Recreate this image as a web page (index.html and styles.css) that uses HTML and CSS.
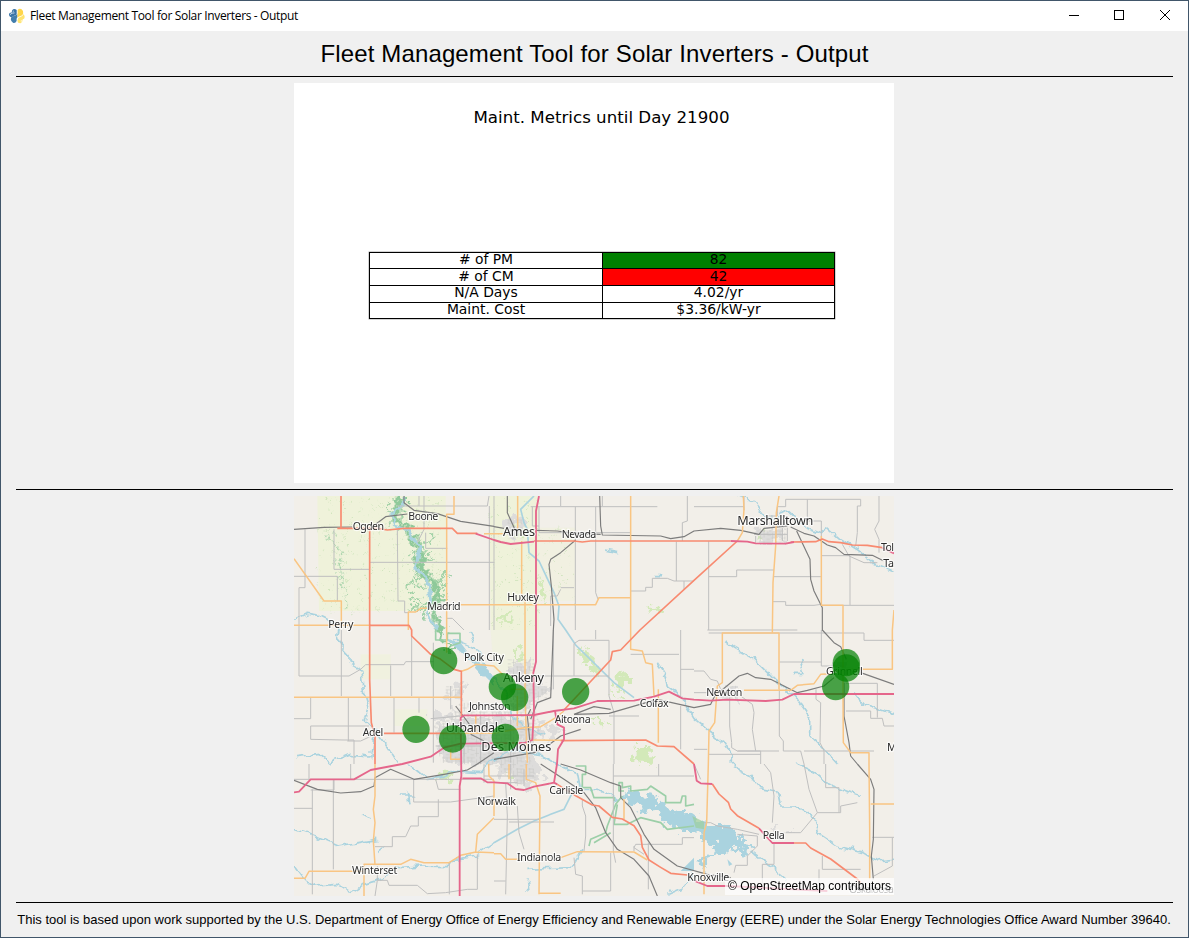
FILE: index.html
```html
<!DOCTYPE html>
<html lang="en">
<head>
<meta charset="utf-8">
<title>Fleet Management Tool for Solar Inverters - Output</title>
<link rel="stylesheet" href="styles.css">
</head>
<body>
<div class="window">
  <header class="titlebar">
    <svg class="app-icon" viewBox="0 0 16 16" width="16" height="16">
      <path d="M3 2.5Q5-.2 7.7 2V6Q7.3 7.7 5.2 7.8Q3.4 8 3 9.6Q0 9 0 6.3Q0 4.3 2.8 4.5Z" fill="#3974a6"/>
      <path d="M1.800 11.2Q2 8.400 5 8Q8 7.600 8.300 5.6Q9 9.200 7.6 10.7V13Q6.4 15.5 4 14.7Q2 13.6 1.800 11.2Z" fill="#427ead"/>
      <path d="M8.6 2.2Q10 .2 12.6 1.2Q14.6 2.4 14.2 5.4Q13.7 7.5 11.4 8Q9.2 8.4 8.8 10Q7.8 7.8 8.7 6.2Z" fill="#ffd64b"/>
      <path d="M14.4 6.3Q16.4 8 15.3 10.5Q14.4 11.3 13.6 11.4Q13.8 14.4 11.4 15.2Q8.6 15.3 8.5 12.7Q8.4 9.6 11 9Q14 8.6 14.4 6.3Z" fill="#ffe46f"/>
      <path d="M1 6.6Q3 4.6 5.5 4.9M3.8 3.2h1" stroke="#d9e7f2" fill="none" stroke-width=".9"/>
      <circle cx="12.3" cy="12.9" r=".6" fill="#fff"/>
    </svg>
    <span class="caption">Fleet Management Tool for Solar Inverters - Output</span>
    <svg class="controls" width="137" height="30" viewBox="0 0 137 30" shape-rendering="crispEdges">
      <path d="M18 14.5h10" stroke="#000" fill="none"/>
      <rect x="63.500" y="9.500" width="9" height="9" stroke="#000" fill="none"/>
      <path d="M109 9L119 19M119 9L109 19" stroke="#000" fill="none" shape-rendering="auto"/>
    </svg>
  </header>
  <main class="content">
    <h1 class="heading"><span>Fleet Management Tool for Solar Inverters - Output</span></h1>
    <div class="rule"></div>
    <section class="figure">
      <div class="figure-title">Maint. Metrics until Day 21900</div>
      <div class="metrics">
        <div class="cell raised"># of PM</div><div class="cell raised good">82</div>
        <div class="cell"># of CM</div><div class="cell bad">42</div>
        <div class="cell raised">N/A Days</div><div class="cell raised">4.02/yr</div>
        <div class="cell raised">Maint. Cost</div><div class="cell raised">$3.36/kW-yr</div>
      </div>
    </section>
    <div class="rule"></div>
    <section class="map">
      <svg class="map-canvas" width="600" height="400" viewBox="0 0 1800 1200">
        <defs>
          <filter id="rough" x="-10%" y="-10%" width="120%" height="120%">
            <feTurbulence type="fractalNoise" baseFrequency=".05" numOctaves="3" seed="4"/>
            <feDisplacementMap in="SourceGraphic" scale="60" xChannelSelector="R" yChannelSelector="G"/>
          </filter>
          <filter id="meander" x="-10%" y="-20%" width="120%" height="140%">
            <feTurbulence type="fractalNoise" baseFrequency=".035" numOctaves="2" seed="8"/>
            <feDisplacementMap in="SourceGraphic" scale="26" xChannelSelector="R" yChannelSelector="G"/>
          </filter>
          <filter id="blocks" x="-10%" y="-10%" width="120%" height="120%">
            <feTurbulence type="fractalNoise" baseFrequency=".03" numOctaves="3" seed="11"/>
            <feDisplacementMap in="SourceGraphic" scale="95" xChannelSelector="R" yChannelSelector="G"/>
          </filter>
          <pattern id="streets" width="37" height="34" patternUnits="userSpaceOnUse">
            <path d="M0 3H25M4 0V23M15 3V15H25M4 13H15M30 8V34M25 24H37M12 28H22" stroke="#cbcac8" stroke-width="2" fill="none"/>
          </pattern>
          <pattern id="woods" width="90" height="80" patternUnits="userSpaceOnUse">
            <path d="M8 12l5 4M40 5l-4 6M70 22l7-2M20 44l6 6M55 52l-5 4M81 66l-3 5M31 73l5-2M62 34l3 6" stroke="#cbe3b8" stroke-width="3" fill="none"/>
          </pattern>
        </defs>
        <rect class="land" width="1800" height="1200"/>

        <!-- county greenery -->
        <g class="meadow">
          <path d="M70 0H455V300L420 345H75Z"/>
          <path d="M586 0H735V402H590Z"/>
          <path d="M735 95H845V315H735Z" opacity=".5"/>
          <path d="M200 475H290V550H200ZM300 640H400V690H300Z" opacity=".7"/>
          <path d="M590 402H720V540H600Z" opacity=".6"/>
        </g>
        <g filter="url(#rough)">
          <path d="M70 0H455V300L420 345H75ZM586 0H735V402H590ZM735 95H845V315H735Z" fill="url(#woods)"/>
        </g>
        <g class="woods" filter="url(#rough)">
          <path d="M330 10L295 60L335 95L380 155L370 205L418 265L430 315L412 355L445 407" stroke-width="26" opacity=".55"/>
          <path d="M330 10L295 60L335 95L380 155L370 205L418 265L430 315L412 355L445 407" stroke-width="16" stroke-dasharray="30 4"/>
          <path d="M380 165L420 110M375 165L410 125M375 200L415 180M420 265L460 230M430 290L465 250M425 305L460 290M420 280L355 260L335 290M410 325L345 310M400 345L350 335M300 60L275 30M405 250L360 235M370 180L345 170" stroke-width="9" stroke-dasharray="18 4" opacity=".8"/>
          <path d="M100 110L140 175L140 240L165 340M145 220L110 190" stroke-width="6" stroke-dasharray="14 7" opacity=".7"/>
          <path d="M430 335L440 407L455 450L500 455" stroke-width="10"/>
        </g>
        <g class="grove" filter="url(#rough)">
          <path d="M850 460h30l20 30l20 40h-20l-35-35ZM965 545l40-20v25l-20 25h-20ZM950 590l30 20h-20Z"/>
          <path d="M1025 750h45v50h-45ZM1070 338h34v12h-34ZM1400 110h20v20h-20ZM900 675h40v10h-40Z"/>
          <path d="M630 70l50 20l10 40l-40-20ZM735 240l20 40l-10 40ZM615 360h35v20h-35ZM660 455h20v40h-20ZM430 830h40v20h-40ZM640 830h40v16h-40Z"/>
        </g>

        <!-- urban areas -->
        <g class="urban" filter="url(#blocks)">
          <path d="M520 660H640L680 680L740 700L700 760L740 850L690 880L620 810L440 805L430 700L500 690Z"/>
          <path d="M650 500H715V560H750V600L700 640H660ZM470 570L510 560V610H465Z"/>
          <path d="M640 70L680 60L685 110L660 130H640ZM1400 100H1470V135H1400Z"/>
          <path d="M1290 575H1335V605H1290ZM1430 990H1450V1010H1430ZM1480 1000H1500V1010H1480ZM750 700L800 690L800 710L760 745ZM420 640H470V680H420ZM1625 495H1660V540H1625Z"/>
        </g>
        <path d="M500 620H720L740 700L700 760L730 850L670 870L600 810L440 800L420 690ZM640 490H720V560H760V610L650 640ZM640 70H685V130H640ZM1390 95H1475V140H1390ZM1290 570H1335V610H1290ZM455 570H500V600H455Z" fill="url(#streets)"/>

        <!-- water -->
        <g class="stream" filter="url(#meander)">
          <path d="M330 0L325 35L290 55L300 90L340 100L375 150L365 215L405 265L410 320L400 350L430 402" stroke-width="8"/>
          <path d="M0 370L40 352L75 358L100 370L135 402L130 430L165 470L165 500L200 520L210 600L222 640L210 670L240 700L270 735L310 800"/>
          <path d="M0 785L80 775L110 800L170 775L230 780L240 720"/>
          <path d="M0 1000L60 1020L130 1050L190 1040L250 1030M0 1110L30 1150L70 1170L130 1165L170 1190L210 1165L260 1150L310 1115L380 1110L460 1112L480 1090L550 1080"/>
          <path d="M320 900H355M340 890L345 925M200 955L230 965M250 1070L270 1055"/>
          <path d="M345 804L370 825L400 850L440 845L480 825L560 830L600 790L650 765L740 775L790 804L850 830L860 880L920 880L970 915L990 890"/>
          <path d="M1335 0L1380 20L1410 60L1440 65L1480 45L1530 90L1580 110L1600 95L1640 130L1690 160L1740 200L1800 225"/>
          <path d="M1295 435L1320 455L1380 490L1440 550L1500 600L1550 670L1550 715L1600 770L1630 804"/>
          <path d="M1090 500L1110 530L1120 570L1160 600L1200 665L1290 740L1315 780L1315 815L1370 840L1395 875L1450 885L1460 930L1510 930L1560 965L1570 1010L1630 1050L1710 1070L1750 1095L1800 1090"/>
          <path d="M1505 804L1570 835L1600 865L1700 900M1680 590L1710 625L1800 655M930 165L970 173M1080 242H1098M1500 535H1530L1520 495"/>
          <path d="M700 1120L830 1115L870 1060M700 1150L705 1190M545 1075L600 1040M1120 1195L1165 1175L1200 1130M1370 1065L1430 1110L1480 1150"/>
          <path d="M480 430L540 455L580 520L600 545L640 600L650 660L690 690L760 720M525 402L540 440"/>
        </g>
        <path class="stream" fill="none" d="M720 0L680 40L690 80L700 100L705 170L735 195L780 290L795 330L792 370L815 402L845 447L960 560L1020 605M600 1040L670 1000L720 975L770 955L810 940L835 890"/>
        <path class="lake" d="M450 430L500 440L530 480L565 500L590 520L600 570L570 540L535 500L500 465Z" filter="url(#meander)"/>
        <path class="lake" d="M988 893L1010 880L1038 900L1080 895L1120 930L1150 955L1190 950L1210 965L1240 990L1295 990L1340 1012L1350 1040L1380 1075L1350 1080L1330 1055L1290 1070L1255 1075L1230 1115L1205 1100L1265 1055L1230 1035L1200 1005L1170 1005L1115 975L1080 950L1010 925Z" filter="url(#rough)"/>
        <path class="lake" d="M1160 1125L1200 1085L1200 1125ZM1300 1090L1315 1105L1305 1110Z"/>
        <g class="park">
          <path d="M845 810H875V835H865V875H890L900 905H960V915M990 885H975V860H985V875L1010 870V885L1060 880L1070 870L1115 900V920H1160L1165 900H1175V930L1200 925M985 900L965 925L940 990L935 1010L890 1030L885 1050M900 1040L950 1010M970 925L960 985H1000L1040 965L1100 980L1120 1000L1200 990"/>
          <path d="M425 400V432H460V412H498V440L470 450"/>
        </g>
        <path class="forest" d="M1195 960L1230 978V1000L1205 995Z" opacity=".7"/>

        <!-- county roads -->
        <g class="minor">
          <path d="M33 100V275L15 275V402L15 540M0 241H130V315M120 100V220H225M227 199H600M310 100L312 315H332V350H343M390 0V100L370 140M310 30H580L585 0M375 0V30M460 157H395V110M458 367H475L510 402M586 30V402M15 540H165L200 520L215 506H330L335 497H420M142 402V600M290 508V600M353 420V600M418 440V800M0 668H50V604M50 690H225M163 604V735M300 604V710M375 604V650M160 735H200L232 720M50 690V730L150 732H180V804"/>
          <path d="M600 0V402M710 32H1090M800 0V30M925 0V30M844 32V325M905 32V290L912 310M715 32V90H735M735 32V110H1010M1180 0V75L1165 80V135M1147 137V255M1010 285H1055V274H1075V247H1120L1140 255H1200M1170 255V280M800 275H840M770 300H790L800 280M770 300V390M905 402V430M844 325V402M840 540V443L855 433H945V600L960 650V804M778 402V580M725 540H945M1010 475H1155M1160 402V600M1160 520H1200M945 660H1035M1160 630V760"/>
          <path d="M1200 32H1350M1350 43V0M1415 60H1450V32H1475V10H1700V30H1690V110L1685 150M1540 10V75H1582V130M1755 0V75L1742 100L1755 130V170M1244 135V402M1244 242H1328V222H1440M1440 242H1582M1582 179H1668V327M1435 317H1475V328H1560L1582 325M1582 328H1800M1645 145L1665 180L1710 200H1750M1244 411H1710V433H1800M1240 402H1510M1582 402V510M1456 498H1582M1582 510H1650M1200 525H1230L1250 550L1270 555L1280 580M1200 590H1240M1307 590V690L1313 740V755L1330 765H1400V804M1340 600L1375 625L1380 650L1375 700L1385 765M1330 765H1455M1456 580V720L1468 735V765H1520L1530 804M1200 760H1240M1245 775H1400M1566 580V610L1580 620L1578 740L1590 765V804M1530 765H1740M1656 562H1750V665M1656 645H1730V667H1765L1770 690H1800"/>
          <path d="M45 850V804M0 850H600M55 880V1195M118 850V1120M0 937H55M50 882H120V850M359 850V918H470L600 900M433 910V962H373V990H350L335 1022H295V1052H243M170 804V850M425 850L433 880H500M466 1100V1195M250 1110V1153H280L285 1168H370L400 1193L455 1190L520 1180H550V1075M250 1153L243 1200M635 860L640 960L635 1195M670 930L675 1010L690 1060M600 970H735M645 978H780M865 910V930L875 960V1020L870 1065M958 804V1065L965 1100M958 840H1200M1094 804V840M1165 1045H1025L1020 1055L1050 1075M1063 1040V1180M1165 1045V1025H1200M840 1085L845 1135L865 1140V1195M635 1155H600M865 1185H950V1070M1020 1065V1050"/>
          <path d="M1200 804L1220 850M1410 804L1430 830L1440 900L1435 980M1530 804L1545 880L1570 950L1520 1010H1475M1570 950H1640V930L1690 920M1595 804V875H1635V950M1230 980H1250L1270 990L1330 1000L1395 1015M1330 1015L1390 1020L1390 1050L1360 1080V1108H1325L1320 1130M1440 1040V1105H1405V1180M1585 1080V1120H1700M1575 1120V1165M1735 1024H1800M1795 1025V1110L1740 1140"/>
          <path d="M570 804V860M650 804V880M690 820V870M570 840H720M600 860L670 860M1385 120V140M1465 95V135M1480 95V135M1380 115H1480M470 570V640M410 668L500 660M510 680V800M425 750H580M560 660V804M650 660V800M630 700H710"/>
        </g>

        <!-- railways -->
        <g class="rail">
          <path d="M0 100L90 94L175 93M245 85L275 62L340 54M330 0V20L360 43L430 53L500 76L600 91M600 92L630 97M725 103L790 105L840 112L920 115M917 0L920 90L925 117L1100 120L1130 128L1170 122L1200 105L1280 97L1340 103L1395 115L1410 97L1480 90"/>
          <path d="M640 0V50L665 105M845 132L800 170L770 190L765 205L772 270L780 370L778 402M1490 93L1530 112L1560 120L1600 147L1625 155L1650 175L1735 178L1768 194M1508 105L1548 190L1550 250L1560 285L1585 335L1585 402L1620 440L1640 452L1657 490M1700 530L1800 565"/>
          <path d="M778 402L770 605L730 620L710 670M840 655L900 632L950 640M840 655L945 652L1090 610L1200 635L1250 625L1262 600L1335 540L1360 532L1385 545L1430 550L1510 590L1540 583L1590 570L1620 545M1650 560V660L1665 740L1670 780L1690 804"/>
          <path d="M0 853L70 880L140 891L200 887L240 870L243 845L290 820L360 850L450 835L520 822L550 804L600 770M485 630L530 690M530 715L570 735M740 804L810 850L870 890L905 935L935 1010L970 1060L1020 1090L1065 1140L1090 1200M800 804L860 822L950 860L980 870L980 905L1010 935L1050 1015L1080 1060L1150 1110L1240 1135L1310 1145M1690 804L1730 850L1740 880L1738 1030L1732 1080L1738 1150"/>
          <path d="M710 640L700 660L708 740M600 790L720 770L760 750L800 720L860 700"/>
        </g>

        <!-- state highways -->
        <g class="state">
          <path d="M0 188L90 315H142V388M0 388H230M480 0V55H458V402V470M343 402V348H365L380 337H400M500 326H905L915 305H1010M1010 0V460L1045 465L1055 500L1075 505L1080 600M570 113H630M671 0V100M683 135V300M693 310V600L700 800M0 604H502M502 526L520 520L545 505L600 510L625 535M650 580H690"/>
          <path d="M1348 0L1350 40L1345 110L1330 135M1455 0L1447 50L1445 150L1437 260L1435 410M1582 120V328H1647V600L1648 740L1670 770H1725V804L1727 1000V1150M1800 342L1795 402V520H1650M1350 411H1285V560L1270 570L1262 680L1245 705L1243 804L1238 980L1230 1010V1195M1285 411H1455V580M1350 583H1455L1490 583L1510 568L1560 563L1580 535L1620 533"/>
          <path d="M243 804L243 900L238 940L243 980L238 1035L243 1105M0 1147H33L45 1126H210M210 1200V1105H320L350 1090L390 1100H465L500 1078L545 1068L600 1070M545 1068L550 1015L600 965M600 1073H620L635 1090H680M800 1085L850 1067L1020 1068L1060 1092M697 804V850L725 860L738 900L735 1195M735 1192H800M990 910V970M1093 580V740M502 712H600L690 695L740 692L785 665L810 645M645 804V850M470 760V790H500M584 804L585 840L600 855V960M710 732L810 733M1730 924H1800M670 600V690M545 660V710"/>
        </g>

        <!-- trunk routes -->
        <g class="trunk">
          <path d="M141 0V96M130 97H250L280 102L330 97H475L490 112H550M227 100V552L232 680L243 720V804M228 388H345L353 402V420L410 475L440 490L480 520L502 526V660M270 712H500"/>
          <path d="M720 135H840L865 138L890 135H1310M1490 138L1565 137L1585 129L1605 137L1640 140L1675 147L1720 148L1765 155M1330 135L1200 253L1038 402L980 462L955 467L950 492L810 642M800 734L1055 732L1090 750L1140 752L1200 804"/>
          <path d="M1255 864L1275 894L1303 919L1310 939L1330 959L1395 997M1500 1041H1535L1550 1056L1610 1089L1690 1149L1700 1160M790 865L840 896L895 927L915 930L955 964L985 969L1020 989L1040 1019L1045 1054L1065 1092L1100 1114L1130 1132L1180 1137"/>
        </g>

        <!-- interstates -->
        <g class="motorway">
          <path d="M735 0L726 45V497L718 530L720 640L715 732L690 741L500 743L450 755L410 782L325 804L230 822L180 850H50L15 887L0 889"/>
          <path d="M545 113L600 132L620 138L650 144L720 137M1310 135L1360 137L1385 142L1475 143L1500 138M1765 155L1800 172"/>
          <path d="M497 1200V870L502 840L500 665L510 658H600L720 657L780 645L840 637L910 615L1020 614L1080 602L1125 587L1165 607L1200 611L1250 614L1300 611L1415 615L1465 611L1500 594H1800"/>
          <path d="M783 645L790 685L810 695V730L792 760L789 804L780 860L720 872L690 882L665 879L640 862L600 859H580L560 847H505M780 860L790 865M1200 804L1208 854L1220 862L1255 864M1395 997L1435 1041H1500M1200 1154L1240 1170H1300L1600 1185"/>
        </g>

        <g class="labels" transform="translate(0 2)">
          <text x="176" y="100" textLength="94">Ogden</text>
          <text x="343" y="70" textLength="90">Boone</text>
          <text x="400" y="340" textLength="100">Madrid</text>
          <text x="103" y="395" textLength="75">Perry</text>
          <text class="city" x="627" y="119" textLength="96">Ames</text>
          <text x="803" y="125" textLength="104">Nevada</text>
          <text x="640" y="314" textLength="95">Huxley</text>
          <text class="city" x="1330" y="86" textLength="228">Marshalltown</text>
          <text x="1761" y="164" textLength="39">Tol</text>
          <text x="1768" y="212" textLength="32">Ta</text>
          <text x="510" y="494" textLength="120">Polk City</text>
          <text x="525" y="639" textLength="125">Johnston</text>
          <text class="city" x="627" y="555" textLength="123">Ankeny</text>
          <text class="city" x="455" y="705" textLength="177">Urbandale</text>
          <text class="city" x="562" y="764" textLength="210">Des Moines</text>
          <text x="782" y="679" textLength="108">Altoona</text>
          <text x="206" y="719" textLength="62">Adel</text>
          <text x="1037" y="631" textLength="87">Colfax</text>
          <text x="1237" y="597" textLength="108">Newton</text>
          <text x="1596" y="535" textLength="110">Grinnell</text>
          <text x="1779" y="764">M</text>
          <text x="766" y="892" textLength="102">Carlisle</text>
          <text x="550" y="925" textLength="116">Norwalk</text>
          <text x="669" y="1094" textLength="133">Indianola</text>
          <text x="174" y="1131" textLength="136">Winterset</text>
          <text x="1406" y="1026" textLength="66">Pella</text>
          <text x="1180" y="1154" textLength="126">Knoxville</text>
          <text x="1665" y="1190" textLength="135">Oskaloosa</text>
        </g>

        <g class="markers">
          <circle cx="449" cy="494" r="41"/>
          <circle cx="625" cy="572" r="41"/>
          <circle cx="662" cy="604" r="41"/>
          <circle cx="845" cy="587" r="41"/>
          <circle cx="366" cy="700" r="41"/>
          <circle cx="476" cy="729" r="41"/>
          <circle cx="634" cy="724" r="41"/>
          <circle cx="1657" cy="500" r="41"/>
          <circle cx="1657" cy="516" r="41"/>
          <circle cx="1625" cy="572" r="41"/>
        </g>
      </svg>
      <div class="attribution">© OpenStreetMap contributors</div>
    </section>
    <div class="rule"></div>
    <footer class="footer"><span>This tool is based upon work supported by the U.S. Department of Energy Office of Energy Efficiency and Renewable Energy (EERE) under the Solar Energy Technologies Office Award Number 39640.</span></footer>
  </main>
</div>
</body>
</html>
```
FILE: styles.css
```css
* { box-sizing: border-box; }
body { margin: 0; }

.window {
  width: 1189px;
  height: 938px;
  display: flex;
  flex-direction: column;
  border: 1px solid #41566a;
  background: #f0f0f0;
  color: #000;
  font-family: "Liberation Sans", Arial, sans-serif;
  overflow: hidden;
}

.titlebar {
  height: 30px;
  flex: none;
  display: flex;
  align-items: center;
  padding-left: 8px;
  background: #fff;
}
.app-icon { flex: none; margin-right: 5px; }
.caption {
  font: 12px/16px "Open Sans", "Noto Sans", sans-serif;
  letter-spacing: -0.35px;
  white-space: nowrap;
}
.controls { margin-left: auto; }

.content {
  flex: 1;
  display: flex;
  flex-direction: column;
  align-items: center;
  padding: 0 15px;
}
.heading {
  height: 45px;
  margin: 0;
  font-size: 24px;
  font-weight: 400;
  line-height: 46px;
  letter-spacing: 0.14px;
  white-space: nowrap;
}
.rule {
  width: 1157px;
  height: 1px;
  flex: none;
  background: #000;
}

.figure {
  width: 600px;
  height: 400px;
  flex: none;
  margin: 6px 1px 6px 0;
  padding: 25px 0 0 75px;
  background: #fff;
  font-family: "DejaVu Sans", sans-serif;
}
.figure-title {
  width: 465px;
  height: 20px;
  font-size: 16.67px;
  line-height: 20px;
  text-align: center;
  white-space: nowrap;
}
.metrics {
  width: 466px;
  margin-top: 124px;
  display: grid;
  grid-template-columns: 232px 231px;
  grid-template-rows: 15px 16px 16px 15px;
  gap: 1px;
  border: 1px solid #000;
  background: #000;
  box-shadow: 0 0 0 0.5px rgba(0, 0, 0, 0.35);
}
.cell {
  background: #fff;
  font-size: 13.89px;
  line-height: 14px;
  text-align: center;
  white-space: nowrap;
}
.raised { line-height: 12px; }
.good { background: #008000; }
.bad { background: #f00; }

.map {
  position: relative;
  width: 600px;
  height: 400px;
  flex: none;
  margin: 6px 1px 6px 0;
}
.map-canvas { display: block; }
.attribution {
  position: absolute;
  right: 0;
  bottom: 1px;
  width: 169px;
  height: 17px;
  padding-right: 3px;
  background: rgba(255, 255, 255, 0.7);
  font-size: 12px;
  line-height: 16px;
  text-align: right;
  white-space: nowrap;
}
.footer {
  height: 34px;
  margin-right: 1px;
  font-size: 13px;
  line-height: 34px;
  white-space: nowrap;
}

.map-canvas g { fill: none; stroke-linejoin: round; }
.land { fill: #f2efe9; }
.map-canvas .meadow { fill: #eff2da; }
.map-canvas .grove { fill: #d3e9b9; }
.map-canvas .urban { fill: #dddcdb; }
.lake { fill: #aad3df; }
.forest { fill: #9bcf9c; }
.woods { stroke: #8fc99a; }
.park { stroke: #9ccfa8; stroke-width: 5; }
.stream { stroke: #aad3df; stroke-width: 5; }
.minor { stroke: #bfbfbf; stroke-width: 3; }
.rail { stroke: #7c7c7c; stroke-width: 3.5; }
.state { stroke: #f9c583; stroke-width: 4.5; }
.trunk { stroke: #f88a70; stroke-width: 5; }
.motorway { stroke: #e5668b; stroke-width: 5.5; }
.map-canvas .labels {
  fill: #2b2b2b;
  stroke: rgba(255, 255, 255, 0.75);
  stroke-width: 7;
  paint-order: stroke;
  font: 32px "Noto Sans", sans-serif;
}
.labels .city { font-size: 38px; }
.map-canvas .markers { fill: #008000; fill-opacity: 0.7; }
```
